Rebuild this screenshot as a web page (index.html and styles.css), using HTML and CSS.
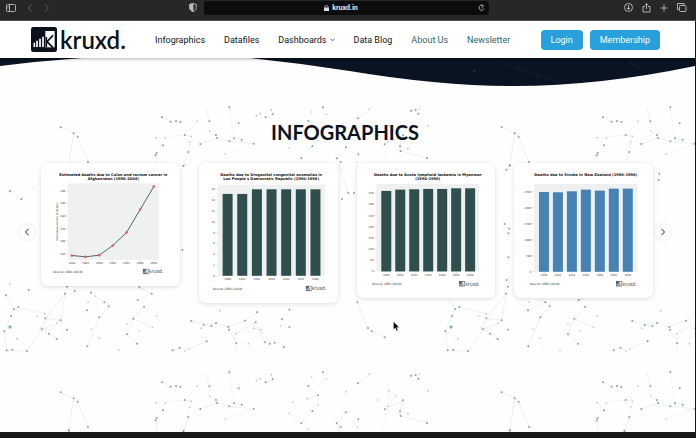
FILE: index.html
```
<!DOCTYPE html>
<html lang="en">

<head>
    <meta charset="UTF-8">
    <meta name="viewport" content="width=device-width, initial-scale=1.0">
    <title>kruxd. | Infographics</title>
    <link rel="stylesheet" href="styles.css">
</head>

<body>

    <!-- Shared logo mark -->
    <svg class="sprite" aria-hidden="true">
        <symbol id="mark" viewBox="0 0 78 75">
            <rect width="78" height="75" rx="7" fill="#0b111c" />
            <path d="M10 47V60M18 41V60M27 35V60M36 29V60" stroke="#fff" stroke-width="5" fill="none" />
            <path d="M43 12H71V61H43Z" fill="#fff" />
            <path d="M46 30V61M66 25L48 44L66 62" stroke="#0b111c" stroke-width="5" fill="none" />
        </symbol>
    </svg>

    <!-- Browser toolbar -->
    <div class="toolbar">
        <div class="tools">
            <button type="button" aria-label="Sidebar">
                <svg width="10" height="8" viewBox="0 0 10 8"><rect x=".5" y=".5" width="9" height="7" rx="1" /><path d="M3.500 .5V7.500M1.500 2.500H2.500M1.500 4H2.500" /></svg>
            </button>
            <button type="button" class="dim" aria-label="Back">
                <svg width="6" height="8" viewBox="0 0 6 8"><path d="M4.500 .5L1 4L4.500 7.500" /></svg>
            </button>
            <button type="button" class="dim" aria-label="Forward">
                <svg width="6" height="8" viewBox="0 0 6 8"><path d="M1 .5L4.500 4L1 7.500" /></svg>
            </button>
        </div>
        <div class="address">
            <button type="button" aria-label="Privacy report">
                <svg width="8" height="9" viewBox="0 0 8 9"><path d="M4 .5L7.300 1.500V4.500C7.300 6.500 6 7.800 4 8.500C2 7.800 .7 6.500 .7 4.500V1.500Z" /><path d="M4 .5V8.500C2 7.800 .7 6.500 .7 4.500V1.500Z" fill="#bbb" /></svg>
            </button>
            <div class="url">
                <svg class="lock" width="5" height="6" viewBox="0 0 5 6"><rect y="2.500" width="5" height="3.500" rx=".5" fill="#ddd" stroke="none" /><path d="M1 3V1.500C1 .2 4 .2 4 1.500V3" /></svg>
                <span>kruxd.in</span>
                <button type="button" class="reload" aria-label="Reload">
                    <svg width="7" height="8" viewBox="0 0 7 8"><path d="M5.500 2.200A2.500 2.500 0 1 0 6 4.500M3 .5L5.500 2.200L3.500 4" /></svg>
                </button>
            </div>
        </div>
        <div class="tools tools-end">
            <button type="button" aria-label="Downloads">
                <svg width="9" height="9" viewBox="0 0 9 9"><circle cx="4.500" cy="4.500" r="4" /><path d="M4.500 2V6.500M2.800 4.800L4.500 6.500L6.200 4.800" /></svg>
            </button>
            <button type="button" aria-label="Share">
                <svg width="9" height="10" viewBox="0 0 9 10"><path d="M3 3.500H1V9H8V3.500H6M4.500 6V.8M2.800 2.300L4.500 .7L6.200 2.300" /></svg>
            </button>
            <button type="button" aria-label="New tab">
                <svg width="8" height="8" viewBox="0 0 8 8"><path d="M4 .5V7.500M.5 4H7.500" /></svg>
            </button>
            <button type="button" aria-label="Tabs">
                <svg width="10" height="9" viewBox="0 0 10 9"><path d="M2 6.500H.5V.5H7V2" /><rect x="2.500" y="2.500" width="6.500" height="6" rx="1" /></svg>
            </button>
        </div>
    </div>

    <div class="page">
        <header class="navbar">
            <a href="#" class="brand">
                <svg class="brand-mark" viewBox="0 0 78 75"><use href="#mark" /></svg>
                <span>kruxd.</span>
            </a>
            <nav>
                <a href="#">Infographics</a>
                <a href="#">Datafiles</a>
                <a href="#">Dashboards
                    <svg width="5" height="4" viewBox="0 0 5 4"><path d="M.5 .8L2.500 2.800L4.500 .8" stroke="#333" fill="none" stroke-width=".8" /></svg>
                </a>
                <a href="#">Data Blog</a>
                <a href="#" class="teal">About Us</a>
                <a href="#" class="teal">Newsletter</a>
            </nav>
            <div class="account">
                <button type="button">Login</button>
                <button type="button">Membership</button>
            </div>
        </header>

        <svg class="wave" viewBox="0 0 696 28" preserveAspectRatio="none" aria-hidden="true">
            <path d="M0 0H82Q40 3 0 8ZM250 0Q300 5 350 13Q440 28 515 28Q600 28 696 8V0Z" fill="#091321" />
            <path d="M500 3L560 25M630 5L645 12" stroke="#26364a" stroke-width="1" stroke-dasharray="1 2" fill="none" />
            <circle cx="475" cy="13" r="1" fill="#2c4153" />
        </svg>

        <main class="infographics">
            <svg class="network" aria-hidden="true">
                <defs>
                    <pattern id="net" x="-10" y="0" width="441" height="265" patternUnits="userSpaceOnUse" viewBox="-30 270 1323 795">
                        <path class="links" d="M182 337L221 355L233 365L264 441M221 355L206 450M486 307L512 320M554 360L574 364M601 387L651 369L688 379L761 386M702 370L725 374M648 360L629 348M628 319L618 280M565 411L551 452M468 368L489 391M470 414V470M769 302L781 296M797 307L818 298L814 284M925 318L954 346L921 356M937 393L904 430M1038 397L1010 430L1022 441M1108 283L1074 310M1166 332L1189 348M1154 388L1209 361L1200 394L1202 408L1281 429M1233 287L1247 285L1255 296M196 464L207 452M30 528L64 552L120 500M1010 430L1045 533M18 841L42 883L33 903L13 949L20 1006L81 1008L126 943L136 910L195 836M42 883L55 876L134 896M126 943L147 956L170 972M136 910L182 916L195 836M126 943L171 925L182 916M285 843L313 862L326 874L298 907L262 994M418 817L455 836L413 855M432 875L400 911L381 958L411 986M400 911L457 937M574 918L634 933L648 924L685 936L735 917L771 892M611 930L648 924M709 985L687 944M767 922L795 982M761 940L783 944L809 986M707 956L767 922M868 884L846 913M518 1006L539 998M567 1002L620 979M1072 862L1104 939L1115 949L1154 967" />
                        <path class="faint" d="M468 368L554 360L591 319M574 364L565 411M676 417L761 386M1189 348L1154 388M1166 332V388L1140 460M868 400L904 430M13 949L42 883M62 976L13 949M81 1008L126 943M195 836L205 790M707 956L709 1020M261 886L313 862M688 277L702 370" />
                        <path class="dots" d="M182 337h0M221 355h0M233 365h0M264 441h0M206 450h0M486 307h0M512 320h0M528 318h0M541 321h0M628 319h0M688 277h0M716 325h0M797 307h0M818 298h0M554 360h0M601 387h0M651 369h0M648 360h0M688 379h0M702 370h0M725 374h0M761 386h0M565 411h0M551 452h0M489 391h0M470 414h0M467 421h0M969 277h0M925 318h0M954 346h0M937 393h0M904 430h0M1038 397h0M1010 430h0M1022 441h0M1074 310h0M1154 388h0M1200 394h0M1209 361h0M1202 408h0M1281 429h0M1075 418h0M1233 287h0M1247 285h0M1255 296h0M196 464h0M207 452h0M191 627h0M205 641h0M202 655h0M202 727h0M197 795h0M30 528h0M64 552h0M655 476h0M653 495h0M550 453h0M547 705h0M1045 533h0M1026 553h0M1062 533h0M1164 585h0M1195 627h0M18 841h0M42 883h0M55 876h0M33 903h0M13 949h0M20 1006h0M37 1004h0M81 1008h0M86 825h0M195 836h0M182 916h0M136 910h0M126 943h0M147 956h0M170 972h0M201 944h0M201 815h0M224 828h0M273 833h0M313 862h0M326 874h0M261 886h0M298 907h0M262 994h0M418 817h0M455 836h0M413 855h0M432 875h0M400 911h0M381 958h0M411 986h0M574 918h0M611 930h0M634 933h0M648 924h0M685 936h0M687 944h0M735 917h0M771 892h0M767 922h0M709 985h0M795 982h0M809 986h0M824 983h0M851 996h0M868 884h0M846 913h0M868 936h0M620 979h0M539 998h0M518 1006h0M1072 862h0M1104 939h0M1115 949h0M1154 967h0M30 936h0" />
                        <path class="specks" d="M591 319h0M769 302h0M781 296h0M814 284h0M574 364h0M569 381h0M629 348h0M676 417h0M468 368h0M496 370h0M935 291h0M979 298h0M921 356h0M954 376h0M923 448h0M879 367h0M868 400h0M1038 335h0M1108 283h0M1166 332h0M1189 348h0M1135 360h0M1164 379h0M1224 401h0M1258 282h0M1285 332h0M1072 441h0M29 806h0M51 971h0M134 896h0M112 904h0M121 939h0M171 925h0M285 843h0M264 862h0M275 942h0M298 970h0M469 904h0M381 927h0M457 937h0M417 948h0M357 1006h0M659 887h0M603 940h0M761 940h0M783 944h0M707 956h0M745 986h0M841 934h0M555 1008h0M567 1002h0" />
                        <circle cx="30" cy="936" r="5" fill="#86afc6" />
                    </pattern>
                </defs>
                <rect width="100%" height="100%" fill="url(#net)" />
            </svg>

            <h1>INFOGRAPHICS</h1>

            <div class="carousel">
                <button type="button" class="arrow" aria-label="Previous">
                    <svg width="6" height="8" viewBox="0 0 6 8"><path d="M4.500 .8L1.500 4L4.500 7.200" /></svg>
                </button>
                <div class="cards" id="cards"></div>
                <button type="button" class="arrow" aria-label="Next">
                    <svg width="6" height="8" viewBox="0 0 6 8"><path d="M1.500 .8L4.500 4L1.500 7.200" /></svg>
                </button>
            </div>

            <svg class="cursor" width="7" height="11" viewBox="0 0 7 11" aria-hidden="true"><path d="M.5 .5V8.500L2.300 6.900L3.600 10L5 9.400L3.700 6.400H6.200Z" fill="#000" stroke="#fff" stroke-width=".4" /></svg>
        </main>
    </div>

    <script src="charts.js"></script>

</body>

</html>
```
FILE: styles.css
```
* {
    box-sizing: border-box;
}

body {
    margin: 0;
    min-height: 100vh;
    display: flex;
    flex-direction: column;
    background-color: #17181a;
    font-family: "Roboto", sans-serif;
    color: #0c121d;
}

a {
    color: inherit;
    text-decoration: none;
}

button {
    padding: 0;
    border: none;
    background: none;
    font: inherit;
    color: inherit;
    cursor: pointer;
}

svg {
    display: block;
}

.sprite {
    position: absolute;
    width: 0;
    height: 0;
}

/* Browser toolbar */
.toolbar {
    display: grid;
    grid-template-columns: 1fr 300px 1fr;
    align-items: center;
    height: 21px;
    padding: 0 9px 5px 6px;
    background-color: #262729;
    border-bottom: 1px solid #55565a;
}

.toolbar svg {
    fill: none;
    stroke: #b0b0b2;
    stroke-width: 1;
}

.tools {
    display: flex;
    align-items: center;
    gap: 11px;
}

.tools-end {
    justify-content: flex-end;
    gap: 9px;
}

.toolbar .dim svg {
    stroke: #606164;
}

.address {
    display: flex;
    align-items: center;
    gap: 7px;
    margin: 0 8px 0 -8px;
}

.url {
    flex: 1;
    display: flex;
    align-items: center;
    justify-content: center;
    gap: 3px;
    height: 14px;
    padding: 0 4px;
    border-radius: 3px;
    background-color: #0b0c0d;
    color: #e8e8e8;
    font: bold 7px/14px "Roboto", sans-serif;
}

.url .lock {
    margin-left: auto;
}

.reload {
    margin-left: auto;
}

/* Site */
.page {
    flex: 1;
    display: flex;
    flex-direction: column;
    margin: 0 1px 6px 0;
    background-color: #fefefe;
}

.navbar {
    position: relative;
    display: flex;
    align-items: center;
    height: 37px;
    padding: 0 35px 0 31px;
    background-color: #fff;
    box-shadow: 0 1px 3px rgba(0, 0, 0, 0.3);
}

.brand {
    display: flex;
    align-items: center;
    gap: 3px;
    width: 124px;
    font: 600 24px/30px "Lato", sans-serif;
}

.brand-mark {
    width: 26px;
    height: 25px;
}

nav {
    display: flex;
    gap: 19px;
    font-size: 9px;
    white-space: nowrap;
}

nav a {
    display: flex;
    align-items: center;
    gap: 3px;
}

nav .teal {
    color: #28686b;
}

.account {
    display: flex;
    gap: 7px;
    margin-left: auto;
}

.account button {
    height: 20px;
    padding: 0 10px;
    border-radius: 4px;
    background-color: #27a0dc;
    color: #fff;
    font-size: 9px;
}

.wave {
    width: 100%;
    height: 28px;
}

/* Infographics */
.infographics {
    position: relative;
    flex: 1;
    padding: 34px 24px 40px 19px;
}

.network {
    position: absolute;
    left: 0;
    top: 19px;
    width: 100%;
    height: calc(100% - 19px);
}

.network path {
    fill: none;
    stroke-linecap: round;
}

.links {
    stroke: #e0e8ed;
    stroke-width: 2;
}

.faint {
    stroke: #f2f5f8;
    stroke-width: 3;
}

.dots {
    stroke: #84a0b0;
    stroke-width: 6;
}

.specks {
    stroke: #b3c0c8;
    stroke-width: 5;
}

h1 {
    position: relative;
    margin: 0 0 19px;
    font: bold 20px/24px "Lato", sans-serif;
    text-align: center;
}

.carousel {
    position: relative;
    display: flex;
    align-items: flex-start;
    gap: 6px;
}

.cards {
    flex: 1;
    display: grid;
    grid-template-columns: repeat(4, 1fr);
    align-items: start;
    gap: 19px;
    margin-right: -4px;
}

.card {
    border-radius: 7px;
    background-color: #fff;
    box-shadow: 0 1px 4px rgba(30, 40, 60, 0.16);
}

.chart {
    width: 100%;
    font-family: "DejaVu Sans", sans-serif;
}

.chart-title {
    font-size: 11px;
    font-weight: bold;
    text-anchor: middle;
    fill: #111;
}

.tick {
    font-size: 8px;
    fill: #333;
}

.source {
    font-size: 9px;
    fill: #333;
}

.chart-brand {
    font: 16px "Lato", sans-serif;
    fill: #555;
}

.arrow {
    display: grid;
    place-items: center;
    width: 16px;
    height: 16px;
    margin-top: 61px;
    border-radius: 50%;
    background-color: #fff;
    box-shadow: 0 0 3px rgba(0, 0, 0, 0.12);
}

.arrow svg {
    fill: none;
    stroke: #222;
    stroke-width: 1;
}

.cursor {
    position: absolute;
    left: 393px;
    top: 235px;
}
```
FILE: charts.js
```
// plot is [left, top, right, bottom] in chart units, tops are the y of each bar or point
const charts = [
    {
        type: "line", height: 369, first: 1998, plot: [81, 61, 354, 291],
        title: ["Estimated deaths due to Colon and rectum cancer in", "Afghanistan (1998-2004)"],
        ticks: [150, 160, 170, 180, 190, 200], tickStart: 273, tickGap: 38,
        start: 93, step: 41, tops: [278, 282, 277, 248, 209, 140, 71],
        source: 36, brand: 305
    },
    {
        type: "bar", height: 420, first: 1990, plot: [56, 65, 378, 339], color: "#2f4f4f",
        title: ["Deaths due to Urogenital congenital anomalies in", "Lao People's Democratic Republic (1990-1996)"],
        ticks: [0, 2, 4, 6, 8, 10, 12, 14, 16], tickStart: 339, tickGap: 32.5,
        start: 86, step: 44, tops: [93, 93, 79, 79, 79, 79, 79],
        source: 41, brand: 320
    },
    {
        type: "bar", height: 406, first: 1990, plot: [58, 63, 367, 326], color: "#2f4f4f",
        title: ["Deaths due to Acute lymphoid leukemia in Myanmar", "(1990-1996)"],
        ticks: [0, 50, 100, 150, 200, 250, 300, 350], tickStart: 326, tickGap: 33.6,
        start: 88, step: 42, tops: [84, 80, 79, 78, 78, 76, 76],
        source: 45, brand: 306
    },
    {
        type: "bar", height: 406, first: 1990, plot: [60, 63, 371, 327], color: "#4682b4",
        title: ["Deaths due to Stroke in New Zealand (1990-1996)"],
        ticks: [0, 500, 1000, 1500, 2000, 2500], tickStart: 327, tickGap: 48.2,
        start: 90, step: 42, tops: [87, 88, 85, 80, 83, 77, 77],
        source: 48, brand: 306
    }
];

function drawChart(c) {
    const [left, top, right, bottom] = c.plot;
    const middle = (left + right) / 2;
    let svg = `<rect x="${left}" y="${top}" width="${right - left}" height="${bottom - top}" fill="#eff0f0"/>`;

    c.title.forEach((line, i) => {
        svg += `<text class="chart-title" x="${middle}" y="${39 + i * 13}">${line}</text>`;
    });

    c.ticks.forEach((tick, i) => {
        const y = c.tickStart - i * c.tickGap;
        svg += `<text class="tick" x="${left - 8}" y="${y + 3}" text-anchor="end">${tick}</text>`;
        svg += `<path d="M${left - 4} ${y}H${left}" stroke="#999"/>`;
    });

    c.tops.forEach((y, i) => {
        const x = c.start + i * c.step;
        if (c.type === "bar") {
            svg += `<rect x="${x - 15}" y="${y}" width="30" height="${bottom - y}" fill="${c.color}"/>`;
        }
        svg += `<path d="M${x} ${bottom}V${bottom + 4}" stroke="#999"/>`;
        svg += `<text class="tick" x="${x}" y="${bottom + 14}" text-anchor="middle">${c.first + i}</text>`;
    });

    if (c.type === "line") {
        const points = c.tops.map((y, i) => `${c.start + i * c.step},${y}`);
        svg += `<polyline points="${points.join(" ")}" fill="none" stroke="#4f6666" stroke-width="3"/>`;
        points.forEach(p => {
            const [x, y] = p.split(",");
            svg += `<circle cx="${x}" cy="${y}" r="4" fill="#d95f6a"/>`;
        });
        svg += `<text class="tick" transform="translate(51 176) rotate(-90)" text-anchor="middle">Estimated number of deaths</text>`;
    }

    const foot = c.height - 38;
    svg += `<text class="source" x="${c.source}" y="${foot}">Source: GBD (2019)</text>`;
    svg += `<svg x="${c.brand}" y="${foot - 14}" width="19" height="18" opacity=".65"><use href="#mark"/></svg>`;
    svg += `<text class="chart-brand" x="${c.brand + 19}" y="${foot + 1}">kruxd.</text>`;

    return `<article class="card"><svg class="chart" viewBox="0 0 417 ${c.height}">${svg}</svg></article>`;
}

document.getElementById("cards").innerHTML = charts.map(drawChart).join("");
```
